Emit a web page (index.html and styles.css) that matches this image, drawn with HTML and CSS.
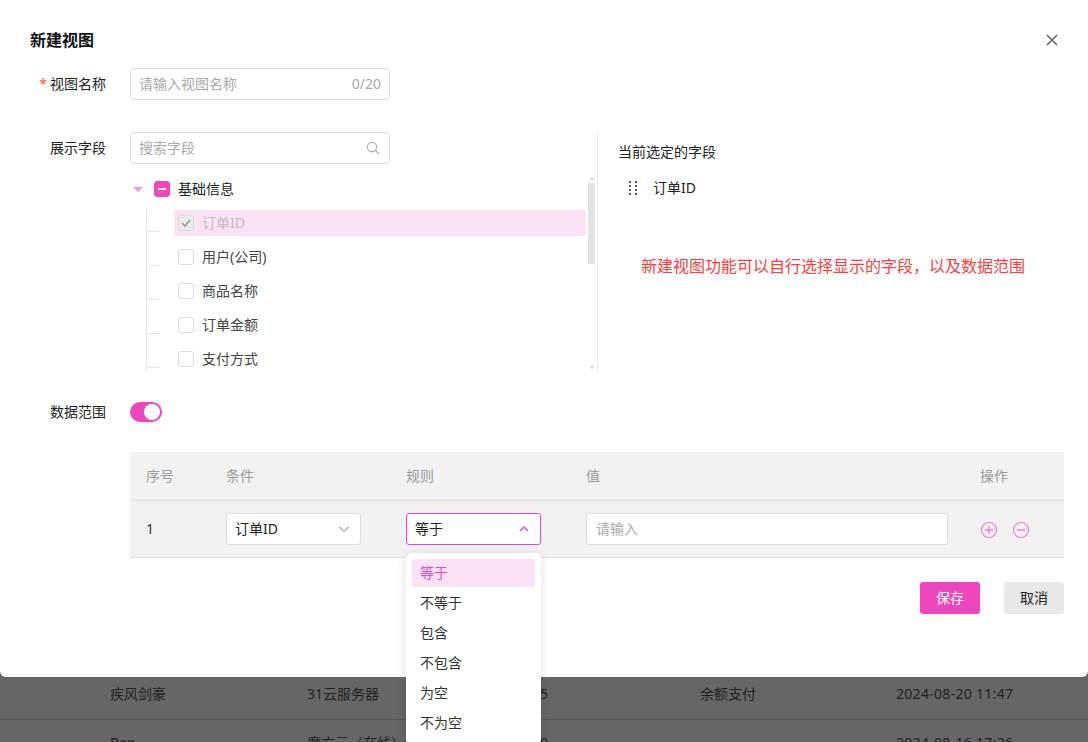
FILE: index.html
```html
<!DOCTYPE html>
<html lang="zh-CN">
<head>
<meta charset="utf-8">
<title>新建视图</title>
<link rel="stylesheet" href="styles.css">
</head>
<body>
<div class="page">
  <section class="modal">
    <header class="modal-head">
      <h1 class="modal-title">新建视图</h1>
      <svg class="close" width="12" height="12" viewBox="0 0 12 12"><path d="M1 1l10 10M11 1L1 11" stroke="#666" stroke-width="1.6" fill="none"/></svg>
    </header>

    <div class="form-row name-row">
      <div class="label"><span class="req">*</span>视图名称</div>
      <div class="field">
        <span class="placeholder">请输入视图名称</span>
        <span class="counter">0/20</span>
      </div>
    </div>

    <div class="form-row fields-row">
      <div class="label">展示字段</div>
      <div class="picker">
        <div class="picker-left">
          <div class="field">
            <span class="placeholder">搜索字段</span>
            <svg class="search-icon" width="14" height="14" viewBox="0 0 14 14"><circle cx="6" cy="6" r="4.6" stroke="#aaa" stroke-width="1.1" fill="none"/><path d="M9.4 9.4l3.6 3.6" stroke="#aaa" stroke-width="1.1" fill="none"/></svg>
          </div>
          <div class="tree-wrap">
            <div class="tree">
              <div class="tree-parent">
                <span class="caret"></span>
                <span class="check check-partial"><i></i></span>
                <span>基础信息</span>
              </div>
              <div class="tree-children">
                <div class="tree-item tree-item-active">
                  <span class="check check-disabled"><svg width="12" height="12" viewBox="0 0 12 12"><path d="M2 6l3 3 5-6" stroke="#999" stroke-width="1.6" fill="none"/></svg></span>
                  <span class="muted">订单ID</span>
                </div>
                <div class="tree-item"><span class="check"></span><span>用户(公司)</span></div>
                <div class="tree-item"><span class="check"></span><span>商品名称</span></div>
                <div class="tree-item"><span class="check"></span><span>订单金额</span></div>
                <div class="tree-item"><span class="check"></span><span>支付方式</span></div>
              </div>
            </div>
            <div class="scrollbar">
              <span class="arrow-up"></span>
              <span class="thumb"></span>
              <span class="arrow-down"></span>
            </div>
          </div>
        </div>
        <div class="picker-right">
          <div class="selected-title">当前选定的字段</div>
          <div class="selected-item">
            <svg width="9" height="14" viewBox="0 0 9 14" fill="#555"><rect x="0" y="0" width="2" height="2"/><rect x="6" y="0" width="2" height="2"/><rect x="0" y="4" width="2" height="2"/><rect x="6" y="4" width="2" height="2"/><rect x="0" y="8" width="2" height="2"/><rect x="6" y="8" width="2" height="2"/><rect x="0" y="12" width="2" height="2"/><rect x="6" y="12" width="2" height="2"/></svg>
            <span>订单ID</span>
          </div>
          <div class="notice">新建视图功能可以自行选择显示的字段，以及数据范围</div>
        </div>
      </div>
    </div>

    <div class="form-row toggle-row">
      <div class="label">数据范围</div>
      <span class="toggle"><i></i></span>
    </div>

    <div class="rules">
      <div class="rules-head">
        <span>序号</span><span>条件</span><span>规则</span><span>值</span><span>操作</span>
      </div>
      <div class="rules-row">
        <span class="rule-no">1</span>
        <div class="select">
          <span>订单ID</span>
          <svg width="12" height="12" viewBox="0 0 12 12"><path d="M1.5 4l4.5 4.5L10.500 4" stroke="#aaa" stroke-width="1.100" fill="none"/></svg>
        </div>
        <div class="select select-open">
          <span>等于</span>
          <svg width="12" height="12" viewBox="0 0 12 12"><path d="M2 8l4-4 4 4" stroke="#ee46bc" stroke-width="1.300" fill="none"/></svg>
        </div>
        <div class="rule-value"><span class="placeholder">请输入</span></div>
        <div class="rule-actions">
          <svg width="18" height="18" viewBox="0 0 18 18"><circle cx="9" cy="9" r="7.500" stroke="#f07ccd" stroke-width="1.200" fill="none"/><path d="M5 9h8M9 5v8" stroke="#f07ccd" stroke-width="1.300" fill="none"/></svg>
          <svg width="18" height="18" viewBox="0 0 18 18"><circle cx="9" cy="9" r="7.500" stroke="#f07ccd" stroke-width="1.200" fill="none"/><path d="M5 9h8" stroke="#f07ccd" stroke-width="1.500" fill="none"/></svg>
        </div>
      </div>
    </div>

    <footer class="modal-foot">
      <button class="btn btn-primary">保存</button>
      <button class="btn btn-plain">取消</button>
    </footer>
  </section>

  <div class="bg-row bg-row-first">
    <span>疾风剑豪</span><span>31云服务器</span><span class="bg-amount">5</span><span>余额支付</span><span class="bg-date">2024-08-20 11:47</span>
  </div>
  <div class="bg-row">
    <span>Ben</span><span>魔方云（在线）</span><span class="bg-amount">0</span><span></span><span class="bg-date">2024-08-16 17:26</span>
  </div>

  <ul class="dropdown">
    <li class="dropdown-active">等于</li>
    <li>不等于</li>
    <li>包含</li>
    <li>不包含</li>
    <li>为空</li>
    <li>不为空</li>
  </ul>
</div>
</body>
</html>
```

FILE: styles.css
```css
* { box-sizing: border-box; }
html, body { margin: 0; padding: 0; height: 100%; overflow: hidden; }
body {
  font-family: "Noto Sans", "Noto Sans CJK SC", sans-serif;
  font-size: 14px;
  line-height: 20px;
  color: #222;
}
.page {
  position: relative;
  width: 1088px;
  height: 742px;
  overflow: hidden;
  background: #666;
}

/* modal */
.modal {
  height: 677px;
  padding: 30px 24px 0 30px;
  background: #fff;
  border-radius: 0 0 6px 6px;
}
.modal-head {
  display: flex;
  align-items: center;
  justify-content: space-between;
  height: 20px;
  margin-bottom: 18px;
}
.modal-title { margin: 0; font-size: 16px; font-weight: 700; line-height: 20px; color: #111; }
.close { margin-right: 6px; }

.form-row { display: flex; }
.label {
  flex: 0 0 76px;
  margin-right: 24px;
  height: 32px;
  line-height: 32px;
  text-align: right;
  white-space: nowrap;
}
.req { margin-right: 3px; color: #f0573c; }
.name-row { margin-bottom: 32px; }
.name-row .field { width: 260px; }

.field {
  display: flex;
  align-items: center;
  justify-content: space-between;
  height: 32px;
  padding: 0 8px;
  background: #fff;
  border: 1px solid #dcdcdc;
  border-radius: 3px;
}
.placeholder { color: #a9a9a9; }
.counter { color: #a9a9a9; }
.search-icon { margin-right: 1px; }

/* picker */
.fields-row { height: 240px; margin-bottom: 30px; }
.picker { display: flex; flex: 1; }
.picker-left {
  width: 468px;
  border-right: 1px solid #ececec;
}
.picker-left .field { width: 260px; }
.tree-wrap { display: flex; height: 196px; margin-top: 12px; overflow: hidden; }
.tree { flex: 0 0 456px; }
.tree-parent {
  display: flex;
  align-items: center;
  height: 26px;
  margin-bottom: 8px;
  padding-left: 3px;
}
.caret {
  width: 0;
  height: 0;
  margin-right: 11px;
  border-left: 5px solid transparent;
  border-right: 5px solid transparent;
  border-top: 5px solid #f29ad8;
}
.tree-parent .check { margin-right: 8px; }
.check {
  display: flex;
  align-items: center;
  justify-content: center;
  flex: 0 0 16px;
  width: 16px;
  height: 16px;
  background: #fff;
  border: 1px solid #dcdcdc;
  border-radius: 3px;
}
.check-partial { background: #ee46bc; border-color: #ee46bc; }
.check-partial i { display: block; width: 8px; height: 2px; background: #fff; }
.check-disabled { background: #ebebeb; border-color: #d9d9d9; }
.tree-children {
  margin-left: 16px;
  padding-left: 27px;
  border-left: 1px solid #e6e6e6;
  height: 162px;
}
.tree-item {
  position: relative;
  display: flex;
  align-items: center;
  gap: 8px;
  height: 26px;
  margin-bottom: 8px;
  padding-left: 4px;
  border-radius: 3px;
  color: #444;
}
.tree-item::before {
  content: "";
  position: absolute;
  left: -27px;
  top: 21px;
  width: 13px;
  height: 1px;
  background: #e6e6e6;
}
.tree-item-active { background: #fbe3f5; }
.muted { color: #c4b9bf; }

.scrollbar {
  display: flex;
  flex-direction: column;
  align-items: center;
  width: 7px;
  margin-left: 2px;
  padding-top: 1px;
}
.arrow-up, .arrow-down {
  width: 0;
  height: 0;
  border-left: 3px solid transparent;
  border-right: 3px solid transparent;
}
.arrow-up { border-bottom: 3px solid #d8d8d8; }
.arrow-down { margin-top: auto; margin-bottom: 3px; border-top: 3px solid #d8d8d8; }
.thumb { display: block; width: 7px; height: 81px; margin-top: 3px; background: #e3e3e3; }

.picker-right { flex: 1; padding: 10px 0 0 20px; }
.selected-title { margin-bottom: 16px; color: #222; }
.selected-item {
  display: flex;
  align-items: center;
  gap: 15px;
  padding-left: 11px;
}
.notice {
  margin: 56px 0 0 23px;
  font-size: 16px;
  line-height: 24px;
  color: #ff3c3c;
  white-space: nowrap;
}

/* toggle */
.toggle-row { height: 20px; margin-bottom: 30px; }
.toggle-row .label { height: 20px; line-height: 20px; }
.toggle {
  display: flex;
  justify-content: flex-end;
  align-items: center;
  width: 32px;
  height: 20px;
  padding: 0 2px;
  background: #ee46bc;
  border-radius: 10px;
}
.toggle i { display: block; width: 16px; height: 16px; background: #fff; border-radius: 50%; }

/* rule table */
.rules { margin-left: 100px; }
.rules-head, .rules-row {
  display: grid;
  grid-template-columns: 80px 180px 180px 394px 84px;
  padding-left: 16px;
  align-items: center;
  background: #f2f2f2;
  border-bottom: 1px solid #e0e0e0;
}
.rules-head { height: 49px; color: #9a9a9a; }
.rules-row { height: 57px; }
.rule-no { color: #333; }
.select {
  display: flex;
  align-items: center;
  justify-content: space-between;
  width: 135px;
  height: 32px;
  padding: 0 10px 0 8px;
  background: #fff;
  border: 1px solid #dcdcdc;
  border-radius: 3px;
}
.select-open { border-color: #ee46bc; }
.rule-value {
  display: flex;
  align-items: center;
  width: 362px;
  height: 32px;
  padding: 0 9px;
  background: #fff;
  border: 1px solid #dcdcdc;
  border-radius: 3px;
}
.rule-actions { display: flex; gap: 14px; margin-top: 2px; }

.modal-foot {
  display: flex;
  justify-content: flex-end;
  gap: 24px;
  margin-top: 24px;
}
.btn {
  width: 60px;
  height: 32px;
  padding: 0;
  border: 0;
  border-radius: 3px;
  font: inherit;
}
.btn-primary { background: #ee46bc; color: #fff; }
.btn-plain { background: #e8e8e8; color: #222; }

/* page behind the modal */
.bg-row {
  display: grid;
  grid-template-columns: 197px 197px 196px 196px 200px;
  height: 47px;
  padding: 13px 0 0 110px;
  color: #222;
  border-bottom: 1px solid #555;
  white-space: nowrap;
}
.bg-row-first { height: 43px; padding-top: 7px; }
.bg-amount { padding-right: 152px; text-align: right; }
.bg-date { letter-spacing: .3px; }

/* dropdown */
.dropdown {
  position: absolute;
  left: 406px;
  top: 553px;
  width: 135px;
  margin: 0;
  padding: 6px;
  list-style: none;
  background: #fff;
  border-radius: 6px;
  box-shadow: 0 2px 12px rgba(0, 0, 0, .12);
}
.dropdown li {
  height: 28px;
  margin-bottom: 2px;
  padding-left: 8px;
  line-height: 28px;
  border-radius: 3px;
  color: #333;
}
.dropdown li.dropdown-active { background: #fbe3f5; color: #ee46bc; }
```
